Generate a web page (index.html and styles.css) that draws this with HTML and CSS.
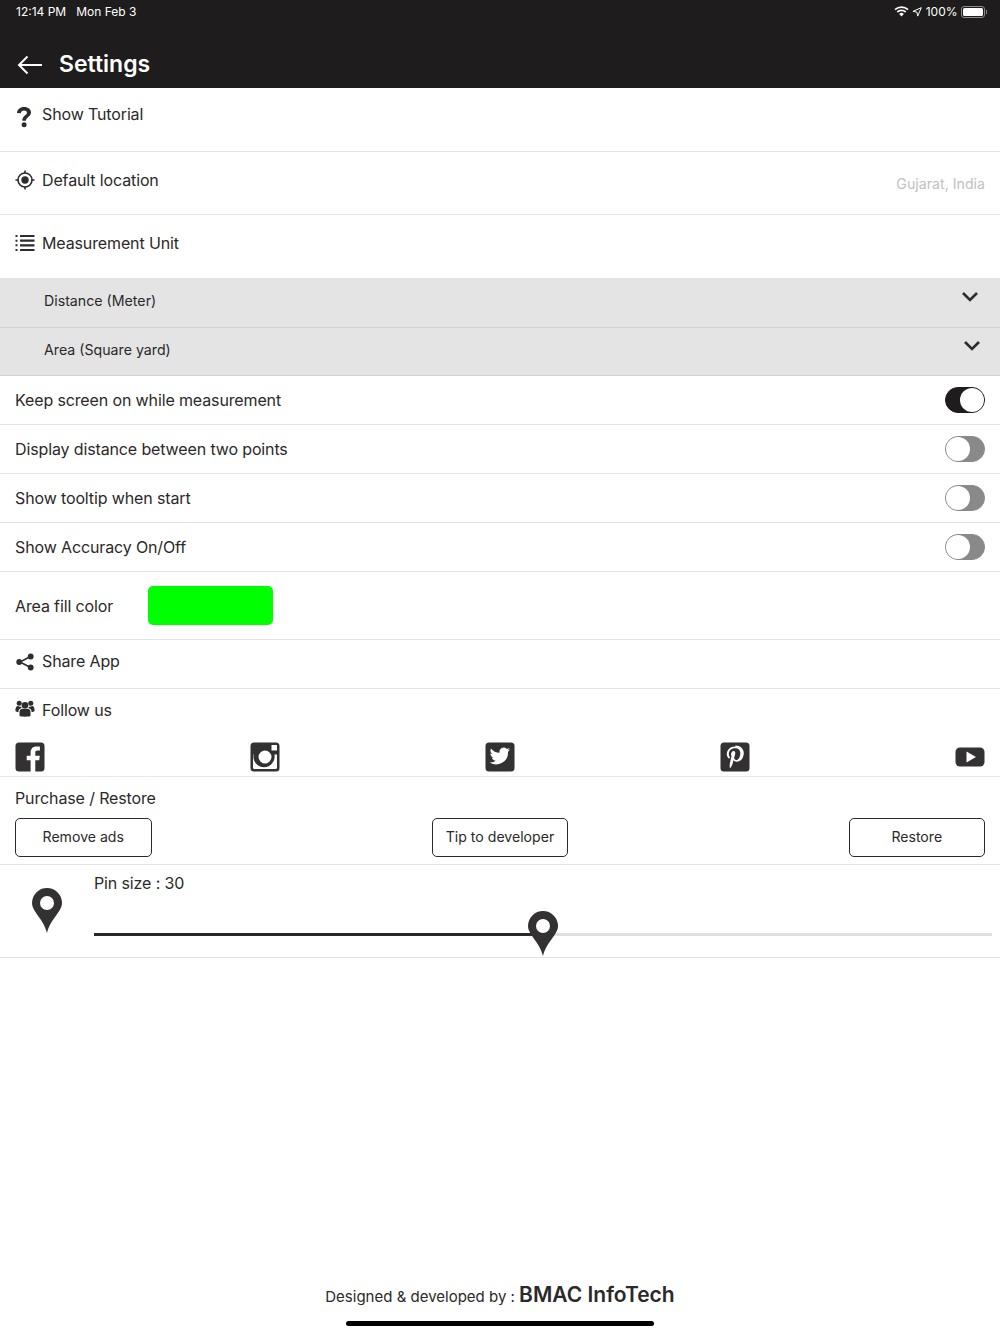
FILE: index.html
```html
<!DOCTYPE html>
<html lang="en">
<head>
<meta charset="utf-8">
<title>Settings</title>
<link rel="stylesheet" href="styles.css">
</head>
<body>
<div class="page">
  <header class="header">
    <div class="status">
      <div class="status-left"><span>12:14 PM</span><span>Mon Feb 3</span></div>
      <div class="status-right">
        <svg class="wifi" width="15" height="11" viewBox="0 0 15 11"><path d="M1 3.600a9.500 9.500 0 0 1 13 0M3.300 6a6.200 6.200 0 0 1 8.400 0" fill="none" stroke="#fff" stroke-width="1.700"/><path d="M5.200 7.900a3.300 3.300 0 0 1 4.600 0L7.500 10.400z" fill="#fff"/></svg>
        <svg class="loc" width="10" height="10" viewBox="0 0 10 10"><path d="M9.300.7.900 4.400l4 .7.800 4z" fill="none" stroke="#fff" stroke-width="1"/></svg>
        <span class="pct">100%</span>
        <div class="battery"><div class="battery-fill"></div></div>
        <div class="battery-tip"></div>
      </div>
    </div>
    <div class="nav">
      <svg width="28" height="22" viewBox="0 0 28 22"><path d="M26 11H3M11.500 2.500 3 11l8.500 8.500" fill="none" stroke="#fff" stroke-width="2"/></svg>
      <h1 class="title">Settings</h1>
    </div>
  </header>

  <section class="row row-top tall first">
    <svg class="icon" width="20" height="22" viewBox="0 0 20 22"><path d="M3 7c.2-3.600 3-6 7-6 4.300 0 7 2.400 7 5.500 0 4.400-5 4.500-5 8.200H8.300c0-5 4.600-5.200 4.600-7.900 0-1.300-1.100-2.200-2.900-2.200-1.900 0-3 1-3.100 2.700z" fill="#2e2c2c"/><circle cx="10.100" cy="18.700" r="2.500" fill="#2e2c2c"/></svg>
    <span class="label">Show Tutorial</span>
  </section>
  <section class="row row-top tall two">
    <svg class="icon" width="20" height="20" viewBox="0 0 20 20"><circle cx="10" cy="10" r="7" fill="none" stroke="#2e2c2c" stroke-width="1.600"/><circle cx="10" cy="10" r="3.700" fill="#2e2c2c"/><path d="M10 .5v3M10 16.500v3M.5 10h3M16.500 10h3" stroke="#2e2c2c" stroke-width="1.600"/></svg>
    <span class="label">Default location</span>
    <span class="value">Gujarat, India</span>
  </section>
  <section class="row row-top tall two unit">
    <svg class="icon list-icon" width="20" height="18" viewBox="0 0 20 18"><path d="M5 2h14.500M5 6.700h14.500M5 11.300h14.500M5 16h14.500" stroke="#2e2c2c" stroke-width="2.200"/><path d="M.5 2h2M.5 6.700h2M.5 11.300h2M.5 16h2" stroke="#2e2c2c" stroke-width="2"/></svg>
    <span class="label">Measurement Unit</span>
  </section>

  <section class="row sub">
    <span>Distance (Meter)</span>
    <svg class="chev" width="18" height="11" viewBox="0 0 18 11"><path d="m2 2 7 7 7-7" fill="none" stroke="#2e2c2c" stroke-width="2.600"/></svg>
  </section>
  <section class="row sub sub-b">
    <span>Area (Square yard)</span>
    <svg class="chev" width="18" height="11" viewBox="0 0 18 11"><path d="m2 2 7 7 7-7" fill="none" stroke="#2e2c2c" stroke-width="2.600"/></svg>
  </section>

  <section class="row toggle-row"><span>Keep screen on while measurement</span><div class="toggle on"><div class="knob"></div></div></section>
  <section class="row toggle-row"><span>Display distance between two points</span><div class="toggle"><div class="knob"></div></div></section>
  <section class="row toggle-row"><span>Show tooltip when start</span><div class="toggle"><div class="knob"></div></div></section>
  <section class="row toggle-row"><span>Show Accuracy On/Off</span><div class="toggle"><div class="knob"></div></div></section>

  <section class="row color-row"><span>Area fill color</span><div class="swatch"></div></section>

  <section class="row share">
    <svg class="icon" width="20" height="18" viewBox="0 0 20 18"><path d="M15.500 3.500 5 9l10.500 5.500" fill="none" stroke="#2e2c2c" stroke-width="1.600"/><circle cx="15.700" cy="3.500" r="2.900" fill="#2e2c2c"/><circle cx="15.700" cy="14.500" r="2.900" fill="#2e2c2c"/><circle cx="4.200" cy="9" r="2.900" fill="#2e2c2c"/></svg>
    <span class="label">Share App</span>
  </section>

  <section class="follow">
    <div class="follow-head">
      <svg class="icon" width="20" height="17" viewBox="0 0 20 17"><g fill="#2e2c2c"><circle cx="10" cy="5.200" r="3.300"/><circle cx="4.200" cy="3.200" r="2.500"/><circle cx="15.800" cy="3.200" r="2.500"/><path d="M4.500 15.500v-3.800c0-2 1.700-3 3-3h5c1.300 0 3 1 3 3v3.800c0 .8-1.500 1.200-5.500 1.200s-5.500-.4-5.500-1.200z"/><path d="M.4 10.200c0-2.500 1-4.200 2.500-4.200.7.600 1.900.9 3 .7.300.6.700 1 1 1.300-2.300.3-3.500 2-3.500 4-2 0-3-.6-3-1.800zM19.600 10.200c0-2.500-1-4.200-2.500-4.200-.7.600-1.900.9-3 .7-.3.600-.7 1-1 1.300 2.300.3 3.500 2 3.500 4 2 0 3-.6 3-1.800z"/></g></svg>
      <span class="label">Follow us</span>
    </div>
    <div class="socials">
      <svg width="30" height="30" viewBox="0 0 30 30"><path d="M4 .5h22A3.500 3.500 0 0 1 29.500 4v22a3.500 3.500 0 0 1-3.500 3.500h-5.700V18.200h3.900l.6-4.500h-4.500v-2.900c0-1.300.4-2.200 2.200-2.200h2.400v-4c-.4 0-1.800-.2-3.500-.2-3.500 0-5.800 2.100-5.800 6v3.300h-3.900v4.500h3.900v11.300H4A3.500 3.500 0 0 1 .5 26V4A3.500 3.500 0 0 1 4 .5z" fill="#333131"/></svg>
      <svg width="30" height="30" viewBox="0 0 30 30"><path fill-rule="evenodd" d="M4 .5h22A3.500 3.500 0 0 1 29.500 4v22a3.500 3.500 0 0 1-3.500 3.500H4A3.500 3.500 0 0 1 .5 26V4A3.500 3.500 0 0 1 4 .5zM21.500 3v5.500H27V3zM3 12.500V25.800c0 .7.500 1.200 1.200 1.200h21.600c.7 0 1.200-.5 1.200-1.200V12.500h-2.600a10.600 10.600 0 1 1-20.800 0zM15 8.500a6.500 6.500 0 1 0 0 13 6.500 6.500 0 0 0 0-13z" fill="#333131"/></svg>
      <svg width="30" height="30" viewBox="0 0 30 30"><rect x=".5" y=".5" width="29" height="29" rx="3.500" fill="#333131"/><path d="M25 7.600c-.8.400-1.600.6-2.400.7.900-.5 1.500-1.300 1.800-2.300-.8.500-1.700.8-2.600 1a4.200 4.200 0 0 0-7.200 3.800C11.100 10.700 8 9 6 6.400c-1.100 1.900-.5 4.300 1.300 5.600-.7 0-1.300-.2-1.900-.5 0 2 1.400 3.800 3.400 4.200-.6.200-1.300.2-1.900.1.500 1.700 2.100 2.900 3.900 2.900A8.400 8.400 0 0 1 4.600 20.400 11.900 11.900 0 0 0 23 9.800c.8-.6 1.500-1.300 2-2.200z" fill="#fff"/></svg>
      <svg width="30" height="30" viewBox="0 0 30 30"><rect x=".5" y=".5" width="29" height="29" rx="3.500" fill="#333131"/><path d="M15.400 4.500c-5.500 0-8.600 3.600-8.600 7.400 0 1.800.9 4 2.500 4.700.5.200.7-1.500.5-1.800-.6-.7-1-1.700-1-2.900 0-3 2.400-5.600 6.200-5.600 3.400 0 5.300 2.100 5.300 4.900 0 3.700-1.600 6.800-4.100 6.800-1.400 0-2.400-1.100-2-2.500.4-1.600 1.100-3.400 1.100-4.600 0-1-.6-1.900-1.700-1.900-1.400 0-2.500 1.400-2.500 3.300 0 1.200.4 2 .4 2l-1.600 7c-.5 2-.1 4.400 0 4.700 0 .1.200.2.300.1.100-.2 1.800-2.300 2.400-4.400l.9-3.600c.5.900 1.800 1.700 3.200 1.700 4.200 0 7.100-3.900 7.100-9 0-3.800-3.300-7.400-8.400-7.400z" fill="#fff"/></svg>
      <svg width="30" height="30" viewBox="0 0 30 30"><rect x=".5" y="5.500" width="29" height="19" rx="4.500" fill="#333131"/><path d="M11.500 9.500 21 15l-9.500 5.500z" fill="#fff"/></svg>
    </div>
  </section>

  <section class="purchase">
    <div class="purchase-title">Purchase / Restore</div>
    <div class="buttons">
      <button class="btn">Remove ads</button>
      <button class="btn">Tip to developer</button>
      <button class="btn">Restore</button>
    </div>
  </section>

  <section class="pin-row">
    <svg class="pin pin-main" width="30" height="45" viewBox="0 0 30 45"><path fill-rule="evenodd" d="M15 0a15 15 0 0 1 15 15c0 8.500-11.500 16-15 30C11.500 31 0 23.500 0 15A15 15 0 0 1 15 0zm0 8a7 7 0 1 0 0 14 7 7 0 0 0 0-14z" fill="#333131"/></svg>
    <div class="pin-body">
      <div class="pin-label">Pin size : 30</div>
      <div class="slider">
        <div class="slider-fill"></div>
        <div class="slider-rest"></div>
        <svg class="thumb" width="30" height="45" viewBox="0 0 30 45"><path fill-rule="evenodd" d="M15 0a15 15 0 0 1 15 15c0 8.500-11.500 16-15 30C11.500 31 0 23.500 0 15A15 15 0 0 1 15 0zm0 8a7 7 0 1 0 0 14 7 7 0 0 0 0-14z" fill="#333131"/></svg>
      </div>
    </div>
  </section>

  <footer class="footer">
    <div class="credit"><span>Designed &amp; developed by : </span><strong>BMAC InfoTech</strong></div>
    <div class="home-bar"></div>
  </footer>
</div>
</body>
</html>
```
FILE: styles.css
```css
* { box-sizing: border-box; }
html, body { margin: 0; background: #fff; }
body { font-family: Inter, "Liberation Sans", sans-serif; color: #2b2929; letter-spacing: -.13px; }
.page { width: 1000px; height: 1334px; display: flex; flex-direction: column; overflow: hidden; }

.header { height: 88px; background: #1e1c1c; color: #fff; display: flex; flex-direction: column; flex: none; letter-spacing: 0; }
.status { height: 23px; padding: 0 13px 0 16px; display: flex; justify-content: space-between; align-items: center; font-size: 12px; }
.status-left { display: flex; gap: 10px; }
.status-right { display: flex; align-items: center; }
.wifi { margin-right: 3px; }
.loc { margin-right: 4px; }
.pct { margin-right: 3px; }
.battery { width: 24px; height: 12px; border: 1px solid #8a8a8a; border-radius: 3px; padding: 1px; }
.battery-fill { height: 100%; background: #fff; border-radius: 1.500px; }
.battery-tip { width: 1.500px; height: 4px; background: #8a8a8a; margin-left: 1px; }
.nav { flex: 1; display: flex; align-items: center; padding: 0 0 0 16px; gap: 15px; margin-top: 18px; }
.title { margin: 0; font-size: 23px; font-weight: 600; line-height: 1; }

.row { display: flex; align-items: center; border-bottom: 1px solid #e3e3e3; flex: none; font-size: 16px; }
.row-top { align-items: flex-start; }
.tall { height: 64px; padding: 16px 15px 0 15px; }
.two { height: 63px; padding-top: 18px; }
.unit { height: 64px; }
.icon { flex: none; }
.first .icon { margin-top: 2px; margin-left: -1px; margin-right: 1px; }
.list-icon { margin-top: 1px; }
.label { margin-left: 7px; line-height: 21px; }
.value { margin-left: auto; margin-top: 4px; font-size: 14.200px; color: #c1c1c1; line-height: 20px; letter-spacing: 0; }

.sub { height: 49px; background: #e4e4e4; border-bottom: 1px solid #d4d4d4; padding: 0 21px 5px 44px; justify-content: space-between; font-size: 14.200px; letter-spacing: 0; }
.sub svg { margin-top: -8px; }
.sub-b { height: 48px; padding-right: 19px; padding-bottom: 4px; }

.toggle-row { height: 49px; padding: 0 15px; justify-content: space-between; }
.toggle { width: 40px; height: 26px; border-radius: 13px; background: #8a8888; border: 1px solid #8a8888; display: flex; justify-content: flex-start; }
.knob { width: 24px; height: 24px; background: #fff; border-radius: 50%; }
.toggle.on { background: #1e1c1c; border-color: #1e1c1c; justify-content: flex-end; }

.color-row { height: 68px; padding: 0 15px; gap: 35px; }
.swatch { width: 125px; height: 39px; background: #00ff00; border-radius: 5px; }

.share { height: 49px; padding: 0 15px 5px; }

.follow { height: 88px; border-bottom: 1px solid #e8e8e8; padding: 0 15px; flex: none; font-size: 16px; display: flex; flex-direction: column; }
.follow-head { display: flex; align-items: center; height: 42px; }
.follow-head .icon { margin-top: -4px; }
.socials { display: flex; justify-content: space-between; align-items: flex-start; margin-top: 11px; }

.purchase { height: 88px; border-bottom: 1px solid #e3e3e3; padding: 0 15px; flex: none; }
.purchase-title { font-size: 16px; line-height: 21px; padding-top: 11px; height: 41px; }
.buttons { display: flex; justify-content: space-between; }
.btn { width: 136.500px; height: 38.500px; background: #fff; border: 1px solid #2b2929; border-radius: 5px; font: inherit; font-size: 14.100px; letter-spacing: 0; color: #2b2929; padding: 0 0 1px; }

.pin-row { height: 93px; display: flex; border-bottom: 1px solid #e3e3e3; flex: none; padding-left: 32px; }
.pin-main { margin-top: 23px; flex: none; }
.pin-body { margin-left: 32px; width: 898px; flex: none; }
.pin-label { font-size: 16px; line-height: 21px; margin-top: 8px; }
.slider { position: relative; display: flex; align-items: center; height: 3px; margin-top: 39px; }
.slider-fill { width: 449px; height: 3px; background: #2b2929; }
.slider-rest { flex: 1; height: 3px; background: #e0e0e0; }
.thumb { position: absolute; left: 434px; top: -22px; }

.footer { flex: 1; display: flex; flex-direction: column; align-items: center; justify-content: flex-end; padding-bottom: 8px; letter-spacing: 0; }
.credit { display: flex; align-items: baseline; font-size: 15px; white-space: pre; margin-bottom: 14px; }
.credit strong { font-size: 21px; font-weight: 600; }
.home-bar { width: 308px; height: 5px; border-radius: 3px; background: #000; }
```
